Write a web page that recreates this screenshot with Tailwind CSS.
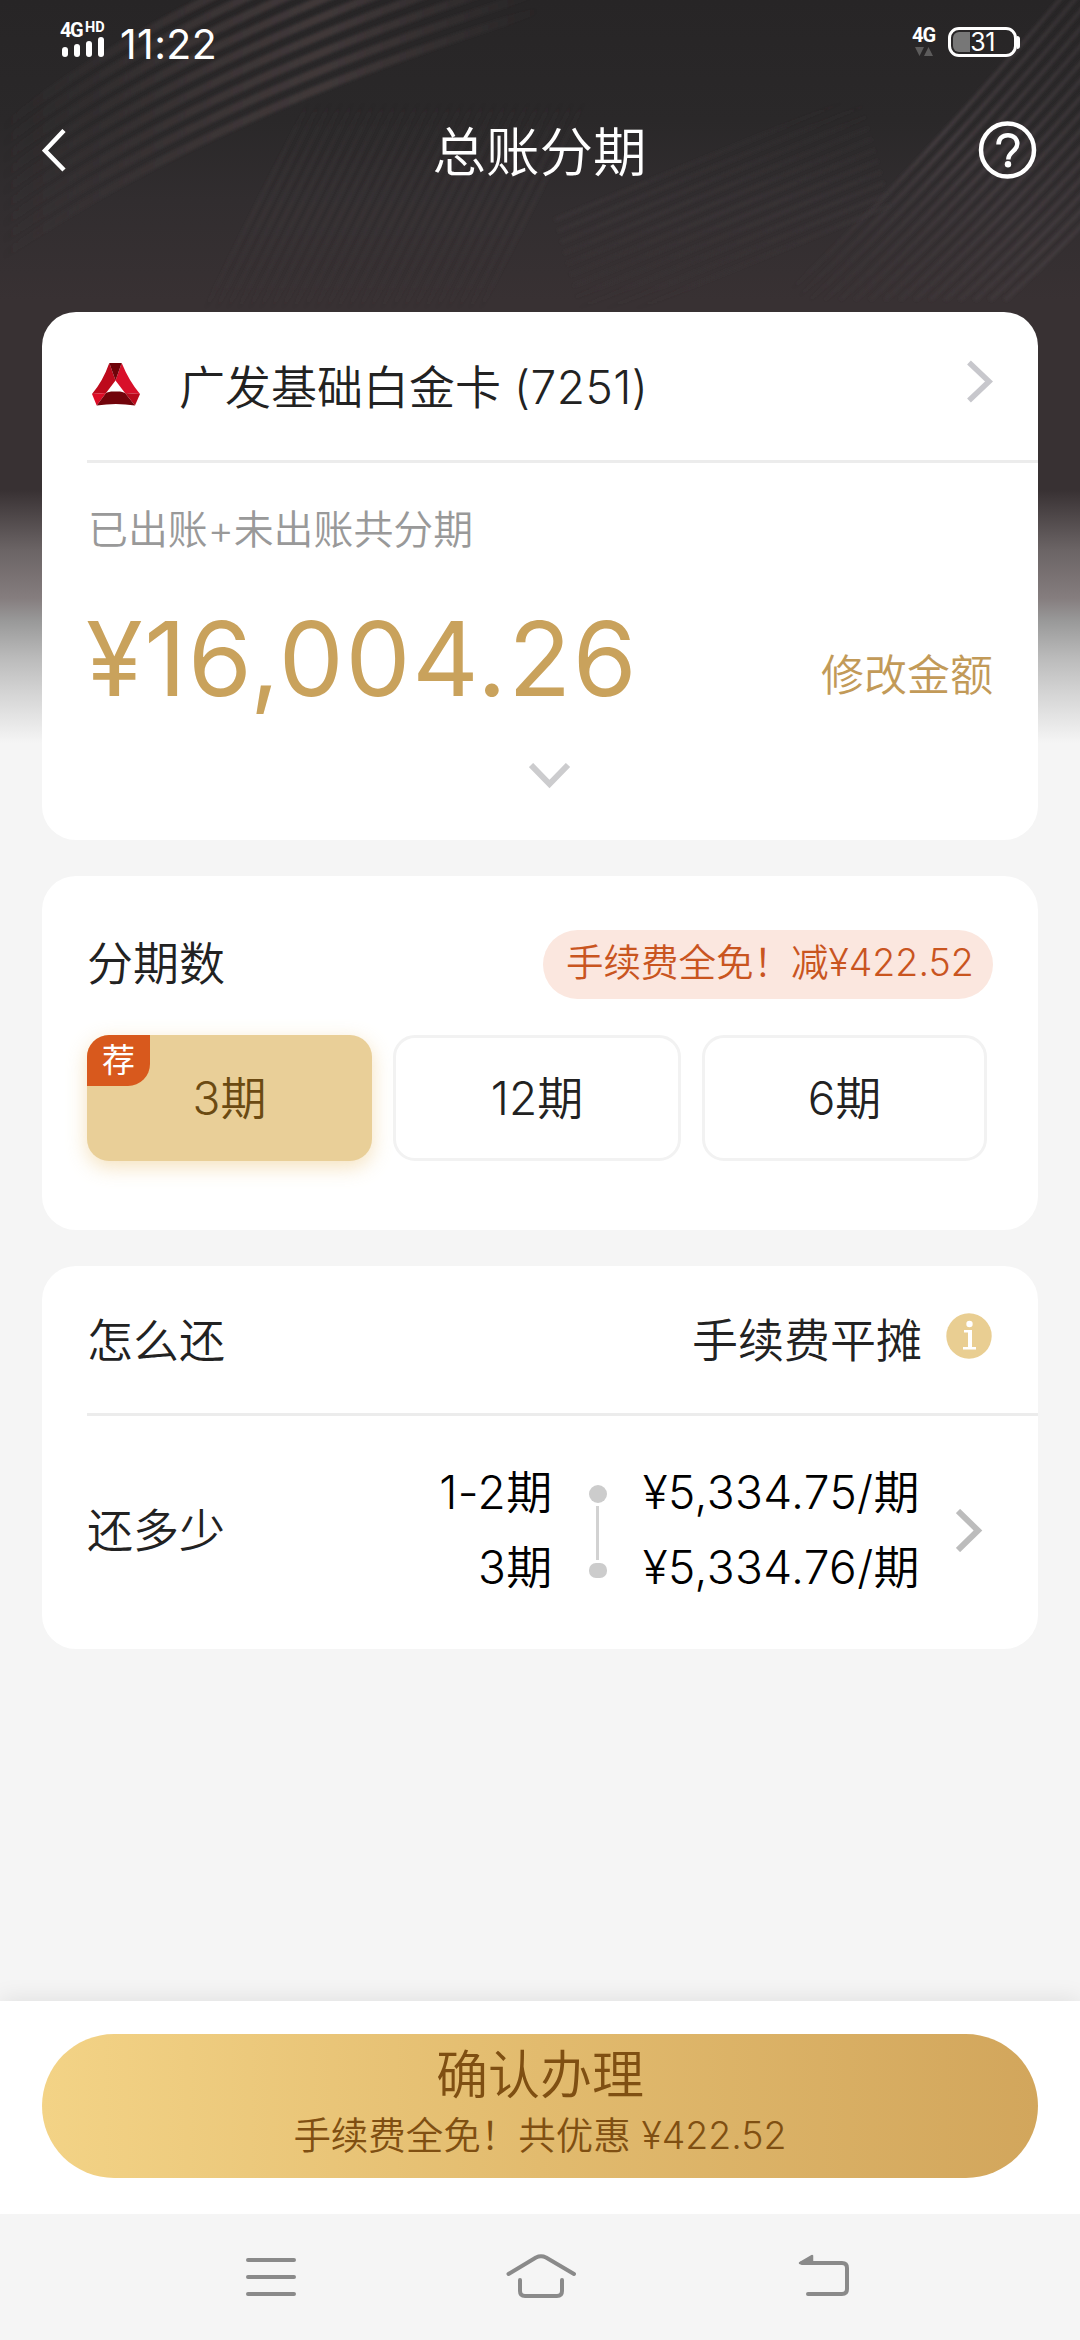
<!DOCTYPE html>
<html lang="zh-CN">
<head>
<meta charset="utf-8">
<title>总账分期</title>
<script src="https://cdn.jsdelivr.net/npm/@tailwindcss/browser@4"></script>
</head>
<body class="bg-[#f5f5f5]">
<div class="relative flex flex-col w-[1080px] h-[2340px] overflow-hidden bg-[#f5f5f5] text-[#222] font-[Inter,'Noto_Sans_CJK_SC',sans-serif] font-[350] whitespace-nowrap">

  <!-- header backdrop -->
  <div class="absolute inset-x-0 top-0 h-[745px] bg-[linear-gradient(to_bottom,#272526_0px,#2a2829_120px,#312d2f_200px,#383133_300px,#383133_490px,#6b6465_550px,#857d7e_598px,#999_621px,#bababa_657px,#d4d4d4_693px,#f5f5f5_743px)]">
    <svg class="block w-full h-[312px]" viewBox="0 0 1080 312" fill="none">
      <defs>
        <linearGradient id="fa" x1="0" y1="0" x2="540" y2="0" gradientUnits="userSpaceOnUse"><stop offset="0" stop-color="#403839" stop-opacity="0"/><stop offset=".45" stop-color="#403839" stop-opacity=".85"/><stop offset=".6" stop-color="#403839"/><stop offset="1" stop-color="#403839" stop-opacity="0"/></linearGradient>
        <linearGradient id="fb" x1="1080" y1="0" x2="790" y2="290" gradientUnits="userSpaceOnUse"><stop offset="0" stop-color="#423b3e" stop-opacity=".5"/><stop offset=".5" stop-color="#423b3e"/><stop offset="1" stop-color="#423b3e" stop-opacity="0"/></linearGradient>
        <linearGradient id="fc" x1="0" y1="100" x2="0" y2="310" gradientUnits="userSpaceOnUse"><stop offset="0" stop-color="#3b3537" stop-opacity="0"/><stop offset=".55" stop-color="#3b3537" stop-opacity=".7"/><stop offset="1" stop-color="#3b3537" stop-opacity="0"/></linearGradient>
        <filter id="soft" x="-10%" y="-10%" width="120%" height="120%"><feGaussianBlur stdDeviation="1.800"/></filter>
      </defs>
      <g id="arcs" stroke="url(#fa)" stroke-width="8" filter="url(#soft)"></g>
      <g id="rays" stroke="url(#fb)" stroke-width="4" filter="url(#soft)"></g>
      <g id="mesh" stroke="url(#fc)" stroke-width="4" filter="url(#soft)"></g>
      <g id="weave" stroke="url(#fc)" stroke-width="4" filter="url(#soft)"></g>
    </svg>
  </div>

  <!-- status bar -->
  <div class="relative flex h-[90px] shrink-0 justify-between pl-[60px] pr-[60px] text-white">
    <div class="flex">
      <div class="flex flex-col w-[52px] pt-[21px]">
        <div class="flex h-[16px] font-bold leading-[18px]"><span class="text-[20px] tracking-[-1.5px] w-[25px] font-[Roboto]">4G</span><span class="text-[14.500px] leading-[13px] font-[Roboto]">HD</span></div>
        <div class="flex items-end gap-[6px] h-[20px] pl-[2px]">
          <i class="block w-[6px] h-[10px] rounded-[3px] bg-white"></i><i class="block w-[6px] h-[13px] rounded-[3px] bg-white"></i><i class="block w-[6px] h-[16px] rounded-[3px] bg-white"></i><i class="block w-[6px] h-[20px] rounded-[3px] bg-white"></i>
        </div>
      </div>
      <div class="pt-[24px] pl-[8px] text-[41px] leading-[40px] font-normal tracking-[0.4px]">11:22</div>
    </div>
    <div class="flex pt-[27px]">
      <div class="flex flex-col w-[36px]">
        <span class="font-[Roboto] font-bold text-[20px] leading-[16px] tracking-[-1px]">4G</span>
        <svg class="mt-[4px] ml-[3px]" width="18" height="9" fill="#5c5b5b"><path d="M0 0h9L4.500 9zM9 9h9L13.500 0z"/></svg>
      </div>
      <div class="relative flex items-center justify-center w-[69px] h-[30px] rounded-[11px] border-[3px] border-white">
        <i class="absolute left-[2px] top-[2px] w-[17px] h-[20px] rounded-l-[6px] bg-[#777]"></i>
        <span class="relative text-[25px] leading-[24px] font-normal tracking-[-0.5px]">31</span>
      </div>
      <i class="block w-[3px] h-[13px] mt-[9px] rounded-r-[3px] bg-white"></i>
    </div>
  </div>

  <!-- title bar -->
  <div class="relative flex h-[222px] shrink-0 items-start justify-between pt-[30px] pl-[42px] pr-[43px] text-white">
    <svg class="mt-[9px]" width="60" height="44" fill="none" stroke="#fff" stroke-width="4.500"><path d="M22 1.500 3 21.500l19 19.500"/></svg>
    <h1 class="mt-[3px] text-[53.500px] leading-[60px] font-[350]">总账分期</h1>
    <svg class="mt-[1px]" width="60" height="60" fill="none" stroke="#fff" viewBox="0 0 60 60"><circle cx="30.500" cy="29" r="26.500" stroke-width="4.500"/><path d="M21.500 23.500c0-6 4-9.300 9.500-9.300s9.300 3.600 9.300 8.600c0 7.500-9 7.700-9 15.700" stroke-width="4.500"/><circle cx="31" cy="43.300" r="3.200" fill="#fff" stroke="none"/></svg>
  </div>

  <!-- amount card -->
  <section class="relative flex flex-col shrink-0 mx-[42px] h-[528px] rounded-[34px] bg-white">
    <div class="flex items-start h-[151px] ml-[45px] pr-[45px] border-b-[3px] border-[#ececec]">
      <svg class="mt-[51px] ml-[4px]" width="49" height="45" viewBox="0 0 49 45"><path d="M18.300 0 24.500 17.500 15 30 1 31Q12 18 18.300 0z" fill="#bd0a1c"/><path d="M30.700 0Q38 18 49 31L34 30 24.500 17.500z" fill="#d8102a"/><path d="M18.300 0h12.400l-6.200 17.500z" fill="#6e0309"/><path d="M1 31l14-1L5.700 42.500z" fill="#dd0c26"/><path d="M49 31l-15-1 10 12.500z" fill="#b90a1c"/><path d="M15 30q4-1.500 5-1.500h9q2 0 5 1.500l10 12.500q-19-3-38.300 0z" fill="#72040b"/></svg>
      <span class="mt-[47px] ml-[39px] text-[46px] leading-[56px]">广发基础白金卡 <span class="tracking-[0.500px]">(7251)</span></span>
      <svg class="mt-[48px] ml-auto" width="26" height="43" fill="none" stroke="#c7c7cc" stroke-width="5.500"><path d="M2 2.500 22 21.500 2 40.500"/></svg>
    </div>
    <div class="mt-[42px] ml-[46px] text-[39.900px] leading-[50px] text-[#999]">已出账+未出账共分期</div>
    <div class="flex items-start justify-between mt-[43px] pl-[44px] pr-[45px] h-[165px]">
      <span class="text-[103px] leading-[122px] font-normal tracking-[1.700px] text-[#c9a25c]">¥16,004.26</span>
      <span class="mt-[49px] text-[43px] leading-[56px] text-[#c29a58]">修改金额</span>
    </div>
    <svg class="ml-[487px]" width="42" height="26" fill="none" stroke="#ccccce" stroke-width="6"><path d="M2 2 20.500 21 39 2"/></svg>
  </section>

  <!-- installment count -->
  <section class="relative shrink-0 mt-[36px] mx-[42px] h-[354px] rounded-[34px] bg-white pl-[45px] pr-[45px] pt-[54px]">
    <div class="flex h-[69px] justify-between">
      <span class="text-[46px] leading-[66px]">分期数</span>
      <span class="flex items-center w-[450px] h-[69px] pl-[23px] rounded-full bg-[#fbe7df] text-[37.500px] leading-[60px] pb-[3px] text-[#c9551f]">手续费全免！减¥422.52</span>
    </div>
    <div class="flex mt-[36px] text-[46px]">
      <div class="relative flex items-center justify-center w-[285px] h-[126px] rounded-[22px] bg-[#e9cf98] text-[#6b4a12] shadow-[0_6px_20px_rgba(233,190,110,0.45)]">3期
        <span class="absolute left-0 top-0 flex items-center justify-center w-[63px] h-[51px] rounded-tl-[22px] rounded-br-[22px] bg-[#d8591d] text-white text-[33px] leading-[48px] pb-[2px] font-normal">荐</span>
      </div>
      <div class="flex items-center justify-center w-[288px] h-[126px] ml-[21px] rounded-[22px] border-[3px] border-[#f2f2f2]">12期</div>
      <div class="flex items-center justify-center w-[285px] h-[126px] ml-[21px] rounded-[22px] border-[3px] border-[#f2f2f2]">6期</div>
    </div>
  </section>

  <!-- repayment -->
  <section class="relative flex flex-col shrink-0 mt-[36px] mx-[42px] h-[383px] rounded-[34px] bg-white text-[46px]">
    <div class="flex items-start h-[150px] ml-[45px] pr-[46px] border-b-[3px] border-[#ececec]">
      <span class="mt-[41px] leading-[66px]">怎么还</span>
      <span class="mt-[41px] ml-auto mr-[24px] leading-[66px]">手续费平摊</span>
      <svg class="mt-[47px]" width="46" height="46" viewBox="0 0 46 46"><circle cx="23" cy="23" r="22.700" fill="#e9ce92"/><g fill="#fff"><circle cx="23.500" cy="11" r="3.200"/><path d="M18 17h8v17h4v2.500H17V34h5V19.500h-4z"/></g></svg>
    </div>
    <div class="flex items-start ml-[45px] pr-[55px] pt-[39px] text-black">
      <span class="mt-[42px] leading-[66px] text-[#222]">还多少</span>
      <div class="flex flex-col ml-auto text-right leading-[74.500px] tracking-[0.500px]"><span>1-2期</span><span>3期</span></div>
      <div class="flex flex-col items-center w-[18px] mx-[36px] mt-[30px]">
        <i class="block w-[18px] h-[18px] rounded-full bg-[#ccc]"></i><i class="block w-[3px] h-[54px] my-[3px] bg-[#d2d2d2]"></i><i class="block w-[18px] h-[15px] rounded-[7px] bg-[#ccc]"></i>
      </div>
      <div class="flex flex-col leading-[74.500px] tracking-[0.400px]"><span>¥5,334.75/期</span><span>¥5,334.76/期</span></div>
      <svg class="mt-[54px] ml-[36px]" width="27" height="43" fill="none" stroke="#bcbcbc" stroke-width="6"><path d="M2 2 22 21.500 2 41"/></svg>
    </div>
  </section>

  <!-- confirm bar -->
  <div class="relative mt-auto shrink-0 h-[213px] px-[42px] pt-[33px] bg-white shadow-[0_-2px_22px_rgba(0,0,0,0.09)]">
    <div class="flex flex-col items-center h-[144px] rounded-full bg-[linear-gradient(to_right,#f3d386,#e2bb6e_50%,#d2a65c)] text-[#7f4f12] pt-[10px]">
      <span class="text-[52px] leading-[64px]">确认办理</span>
      <span class="text-[37.500px] leading-[56px]">手续费全免！共优惠 ¥422.52</span>
    </div>
  </div>

  <!-- system navigation -->
  <nav class="relative shrink-0 flex h-[126px] bg-[#f5f5f5] pt-[38px] pl-[244px]">
    <svg width="620" height="50" viewBox="244 2252 620 50" fill="none" stroke="#8a8a8a" stroke-width="4" stroke-linecap="round" stroke-linejoin="round"><path d="M248 2260h46M248 2277h46M248 2294h46"/><path d="M508.500 2274l27.500-16.500q5-2.500 10 0l28 16.500M520 2280v11q0 5 5 5h32q5 0 5-5v-11"/><path d="M802 2263h40q5 0 5 5v21q0 5-5 5h-34"/><path d="M800 2263l12-7v7z" fill="#8a8a8a" stroke-width="2.500"/></svg>
  </nav>
</div>
<script>
  // thin decorative curves behind the header
  const draw = (id, n, f) => { document.getElementById(id).innerHTML = Array.from({length: n}, (_, i) => '<path d="' + f(i) + '"/>').join(''); };
  draw('arcs', 9, i => `M0 ${258 - i * 16}Q${205 - i * 6} ${112 - i * 14} ${560 - i * 10} ${4 - i * 15}`);
  draw('rays', 16, i => `M${1068 + i * 15} -10Q${900 + i * 15} 190 ${780 + i * 15} 300`);
  draw('mesh', 26, i => `M${205 + i * 11} 310L${310 + i * 11} 100`);
  draw('weave', 11, i => `M${555 + i * 3} ${220 + i * 11}L${860 + i * 3} ${95 + i * 11}`);
</script>
</body>
</html>
